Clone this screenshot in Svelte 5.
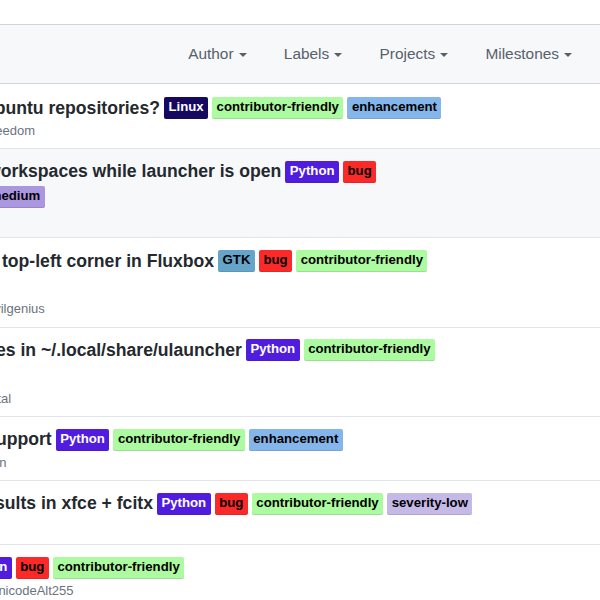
<script lang="ts">
	type Row = {
		title: string;
		shift: number;
		labels: string[];
		wrapped?: string[];
		blank?: boolean;
		meta: string;
		metaShift: number;
		shaded?: boolean;
	};

	const filters = ['Author', 'Labels', 'Projects', 'Milestones'];

	const rows: Row[] = [
		{
			title: 'ubuntu repositories?',
			shift: -16,
			labels: ['Linux', 'contributor-friendly', 'enhancement'],
			meta: 'reedom',
			metaShift: -9
		},
		{
			title: 'workspaces while launcher is open',
			shift: -13,
			labels: ['Python', 'bug'],
			wrapped: ['severity-medium'],
			meta: '\u00a0',
			metaShift: 0,
			shaded: true
		},
		{
			title: 'top-left corner in Fluxbox',
			shift: 2,
			labels: ['GTK', 'bug', 'contributor-friendly'],
			blank: true,
			meta: 'evilgenius',
			metaShift: -13
		},
		{
			title: 'es in ~/.local/share/ulauncher',
			shift: -4,
			labels: ['Python', 'contributor-friendly'],
			blank: true,
			meta: 'vital',
			metaShift: -12
		},
		{
			title: 'upport',
			shift: -4,
			labels: ['Python', 'contributor-friendly', 'enhancement'],
			meta: 'on',
			metaShift: -8
		},
		{
			title: 'sults in xfce + fcitx',
			shift: -5,
			labels: ['Python', 'bug', 'contributor-friendly', 'severity-low'],
			meta: '\u00a0',
			metaShift: 0
		},
		{
			title: '',
			shift: -42,
			labels: ['Python', 'bug', 'contributor-friendly'],
			meta: 'UnicodeAlt255',
			metaShift: -11
		}
	];

	const labelClass = (name: string) =>
		name.toLowerCase().replace('severity-', 'sev-').replace('contributor-friendly', 'friendly');
</script>

<div class="page">
	<div class="filters">
		{#each filters as name}
			<span class="filter">{name}<i class="caret"></i></span>
		{/each}
	</div>

	<div class="rows">
		{#each rows as row}
			<div class="row" class:shaded={row.shaded}>
				<div class="line" style="margin-left: {row.shift}px">
					{#if row.title}<span class="title">{row.title}</span>{/if}
					{#each row.labels as label}
						<span class="label {labelClass(label)}">{label}</span>
					{/each}
				</div>

				{#if row.wrapped}
					<div class="line wrap">
						{#each row.wrapped as label}
							<span class="label {labelClass(label)}">{label}</span>
						{/each}
					</div>
				{/if}

				{#if row.blank}
					<div class="line blank"></div>
				{/if}

				<div class="meta" style="margin-left: {row.metaShift}px">{row.meta}</div>
			</div>
		{/each}
	</div>
</div>

<style>
	:global(body) {
		margin: 0;
		background: #fff;
	}

	.page {
		width: 600px;
		height: 600px;
		overflow: hidden;
		padding-top: 24px;
		box-sizing: border-box;
		font-family: 'Liberation Sans', Arial, sans-serif;
		color: #24292e;
	}

	.filters {
		display: flex;
		justify-content: flex-end;
		align-items: center;
		gap: 37.3px;
		height: 58px;
		padding-right: 28px;
		border-top: 1px solid #d1d5da;
		border-bottom: 1px solid #d1d5da;
		background: #f6f8fa;
		font-size: 15.4px;
		color: #586069;
	}

	.filter {
		display: flex;
		align-items: center;
		white-space: nowrap;
	}

	.caret {
		width: 0;
		height: 0;
		margin-left: 5px;
		margin-top: 2px;
		border-top: 4px solid #586069;
		border-left: 4px solid transparent;
		border-right: 4px solid transparent;
	}

	.row {
		padding: 11.7px 0 9.3px;
		border-bottom: 1px solid #e1e4e8;
		overflow: hidden;
	}

	.row:first-child {
		padding-top: 13px;
		padding-bottom: 9px;
	}

	.row.shaded {
		background: #f6f8fa;
	}

	.line {
		display: flex;
		align-items: center;
		gap: 4px;
		height: 22px;
		white-space: nowrap;
	}

	.line.wrap {
		margin-top: 3.33px;
		margin-left: -69px;
	}

	.line.blank {
		margin-top: 3.33px;
	}

	.title {
		font-size: 17.6px;
		font-weight: 700;
	}

	.label {
		display: inline-block;
		height: 22px;
		line-height: 20px;
		padding: 0 4.5px;
		box-sizing: border-box;
		border-radius: 2px;
		font-size: 13.2px;
		font-weight: 700;
		color: #000;
		box-shadow: inset 0 -1px 0 rgba(27, 31, 35, 0.12);
	}

	.linux {
		background: #15085f;
		color: #fff;
	}

	.python {
		background: #501ddf;
		color: #fff;
	}

	.friendly {
		background: #adfba0;
	}

	.enhancement {
		background: #84b6eb;
	}

	.bug {
		background: #fc2929;
	}

	.gtk {
		background: #65a5c9;
	}

	.sev-medium {
		background: #ab96e0;
	}

	.sev-low {
		background: #c5b9e8;
	}

	.meta {
		margin-top: 3px;
		height: 17px;
		font-size: 13px;
		line-height: 17px;
		color: #6a737d;
		white-space: nowrap;
	}
</style>
